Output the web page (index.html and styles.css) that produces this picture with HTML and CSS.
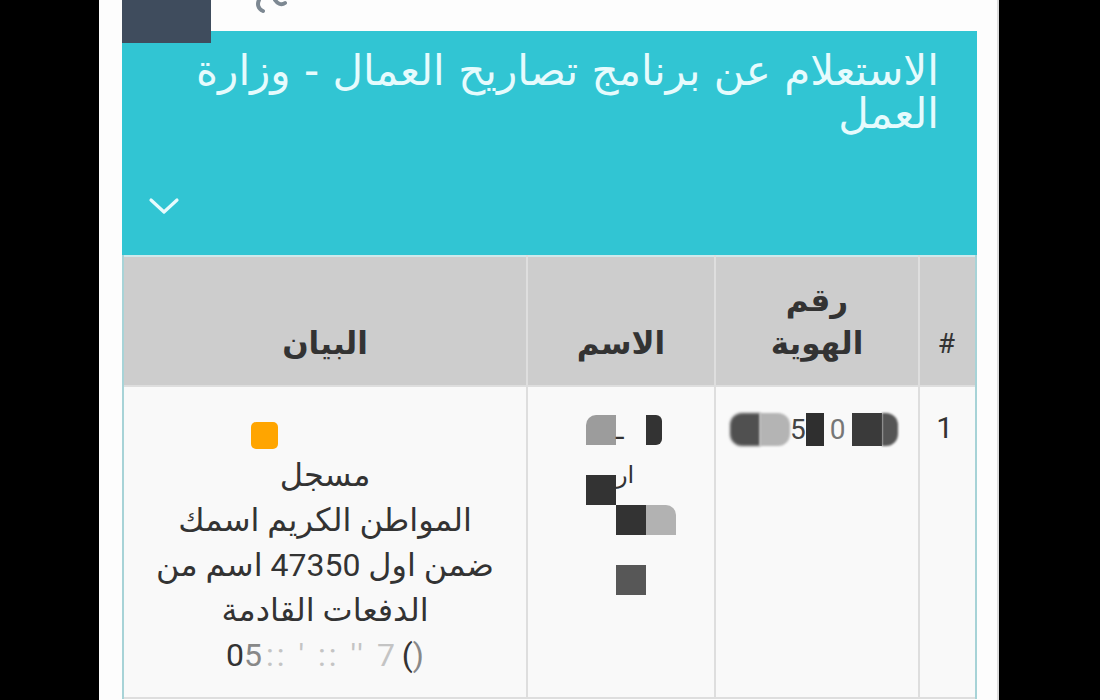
FILE: index.html
```html
<!DOCTYPE html>
<html lang="ar">
<head>
<meta charset="utf-8">
<title>الاستعلام عن برنامج تصاريح العمال</title>
<link rel="stylesheet" href="styles.css">
</head>
<body>
<div class="screen">
  <div class="topbar">
    <div class="brand-block"></div>
    <svg class="logo-frag" width="40" height="16" viewBox="0 0 40 16">
      <path d="M6 0 C4 4 5 9 10 11 M22 0 C24 3 28 6 32 3" fill="none" stroke="#7d8892" stroke-width="4" stroke-linecap="round"/>
    </svg>
  </div>
  <div class="panel">
    <h1 class="panel-title">الاستعلام عن برنامج تصاريح العمال - وزارة العمل</h1>
    <svg class="chevron" width="32" height="22" viewBox="0 0 32 22">
      <path d="M3 5 L16 17 L29 5" fill="none" stroke="#e8fbfd" stroke-width="3.2" stroke-linecap="round" stroke-linejoin="round"/>
    </svg>
  </div>
  <div class="table-wrap">
    <table class="result">
      <thead>
        <tr>
          <th class="c-num">#</th>
          <th class="c-id">رقم<br>الهوية</th>
          <th class="c-name">الاسم</th>
          <th class="c-desc">البيان</th>
        </tr>
      </thead>
      <tbody>
        <tr>
          <td class="c-num">1</td>
          <td class="c-id">
            <div class="id-blur">
              <span class="b b1"></span><span class="b b2"></span><span class="g">5</span><span class="b b3"></span><span class="g g0">0</span><span class="b b4"></span><span class="b b5"></span>
            </div>
          </td>
          <td class="c-name">
            <div class="name-mosaic">
              <span class="m m-gray m-r1c1"></span>
              <span class="m-glyph m-r1c2">ـ</span>
              <span class="m m-dark m-r1c3"></span>
              <span class="m m-dark m-r3c1"></span>
              <span class="m-glyph ar m-r3c2">ار</span>
              <span class="m m-dark m-r4c2"></span>
              <span class="m m-light m-r4c3"></span>
              <span class="m m-mid m-r6c2"></span>
            </div>
          </td>
          <td class="c-desc">
            <span class="status"></span>
            <div class="desc-text">مسجل<br>المواطن الكريم اسمك<br>ضمن اول 47350 اسم من<br>الدفعات القادمة<br><span class="phone">0<span class="fade">5</span><span class="faint">:: ' :: '' 7</span>(<span class="fade">)</span></span></div>
          </td>
        </tr>
      </tbody>
    </table>
  </div>
</div>
</body>
</html>
```

FILE: styles.css
```css
html, body {
  margin: 0;
  padding: 0;
  background: #000;
  height: 700px;
  overflow: hidden;
}

.screen {
  position: relative;
  width: 900px;
  height: 700px;
  margin-left: 99px;
  padding: 0 20px 0 23px;
  box-sizing: border-box;
  background: #fdfdfd;
  border-right: 2px solid #dcdcdc;
  font-family: Roboto, "DejaVu Sans", sans-serif;
}

.topbar {
  height: 31px;
  position: relative;
}

.brand-block {
  position: absolute;
  left: 0;
  top: 0;
  width: 89px;
  height: 43px;
  background: #3f4c5d;
  z-index: 2;
}

.logo-frag {
  position: absolute;
  left: 131px;
  top: 0;
}

.panel {
  background: #31c5d3;
  height: 224px;
  box-sizing: border-box;
  padding: 18px 38px 0 26px;
  direction: rtl;
  display: flex;
  flex-direction: column;
}

.panel-title {
  margin: 0;
  font-family: "DejaVu Sans", sans-serif;
  font-weight: normal;
  font-size: 42px;
  line-height: 43px;
  color: #e6fbfd;
  text-align: right;
  padding-left: 10px;
}

.chevron {
  margin-top: auto;
  margin-bottom: 38px;
  align-self: flex-end;
}

.table-wrap {
  border: 2px solid #a7d3d7;
  border-top: none;
  border-bottom: none;
  background: #f9f9f9;
}

.result {
  width: 100%;
  border-collapse: collapse;
  direction: rtl;
  table-layout: fixed;
  color: #333;
}

.result th, .result td {
  border-left: 2px solid #dedede;
}

.result th:last-child, .result td:last-child {
  border-left: none;
}

.result th {
  background: #cdcdcd;
  font-size: 31px;
  font-weight: bold;
  line-height: 43px;
  vertical-align: bottom;
  padding: 0 8px 20px;
  height: 130px;
  box-sizing: border-box;
  text-align: center;
  border-top: 2px solid #cfe9eb;
  border-bottom: 2px solid #dedede;
}

.result th.c-num {
  text-align: right;
  padding-right: 20px;
  font-weight: normal;
  font-size: 28px;
}

.c-num { width: 56px; }
.c-id { width: 204px; }
.c-name { width: 188px; }

.result td {
  vertical-align: top;
  padding: 18px 8px 19px;
  font-size: 32px;
  line-height: 45px;
  text-align: center;
  border-bottom: 2px solid #dedede;
  height: 310px;
  box-sizing: border-box;
}

.result td.c-num {
  text-align: right;
  padding-right: 22px;
  font-size: 30px;
}

.id-blur {
  display: flex;
  direction: ltr;
  align-items: center;
  height: 33px;
  margin-top: 8px;
  margin-left: 6px;
}

.b { display: block; height: 33px; }
.b1 { width: 30px; background: #505050; border-radius: 12px 0 0 12px; filter: blur(1.5px); }
.b2 { width: 30px; background: #b4b4b4; border-radius: 0 12px 12px 0; filter: blur(1px); }
.b3 { width: 18px; background: #2f2f2f; }
.b4 { width: 30px; background: #3a3a3a; margin-left: 6px; }
.b5 { width: 16px; background: #555; border-radius: 0 12px 12px 0; filter: blur(1px); }
.g { font-size: 28px; line-height: 33px; color: #444; }
.g0 { color: #777; margin-left: 6px; }

.name-mosaic {
  display: grid;
  grid-template-columns: repeat(4, 30px);
  grid-template-rows: repeat(6, 30px);
  direction: ltr;
  width: 120px;
  margin: 10px 0 0 36px;
}

.m { display: block; }
.m-gray { background: #9c9c9c; border-radius: 10px 0 0 0; }
.m-dark { background: #333; }
.m-light { background: #b2b2b2; border-radius: 0 10px 0 0; }
.m-mid { background: #575757; }
.m-glyph { font-family: "DejaVu Sans", sans-serif; font-size: 26px; line-height: 30px; color: #333; }

.m-r1c1 { grid-row: 1; grid-column: 1; }
.m-r1c2 { grid-row: 1; grid-column: 2; text-align: left; }
.m-r1c3 { grid-row: 1; grid-column: 3; width: 16px; border-radius: 0 6px 6px 0; }
.m-r3c1 { grid-row: 3; grid-column: 1; }
.m-r3c2 { grid-row: 2 / span 2; grid-column: 2; line-height: 60px; text-align: left; font-size: 24px; }
.m-r4c2 { grid-row: 4; grid-column: 2; }
.m-r4c3 { grid-row: 4; grid-column: 3; }
.m-r6c2 { grid-row: 6; grid-column: 2; }

.status {
  display: block;
  width: 27px;
  height: 27px;
  border-radius: 5px;
  background: #ffa500;
  margin: 17px auto 4px;
  position: relative;
  left: -61px;
}

.desc-text {
  white-space: nowrap;
}

.phone {
  display: inline-block;
  direction: ltr;
  unicode-bidi: isolate;
  white-space: pre;
}

.fade { color: #888; }
.faint { color: #c4c4c4; letter-spacing: 3px; padding: 0 4px; }
```
